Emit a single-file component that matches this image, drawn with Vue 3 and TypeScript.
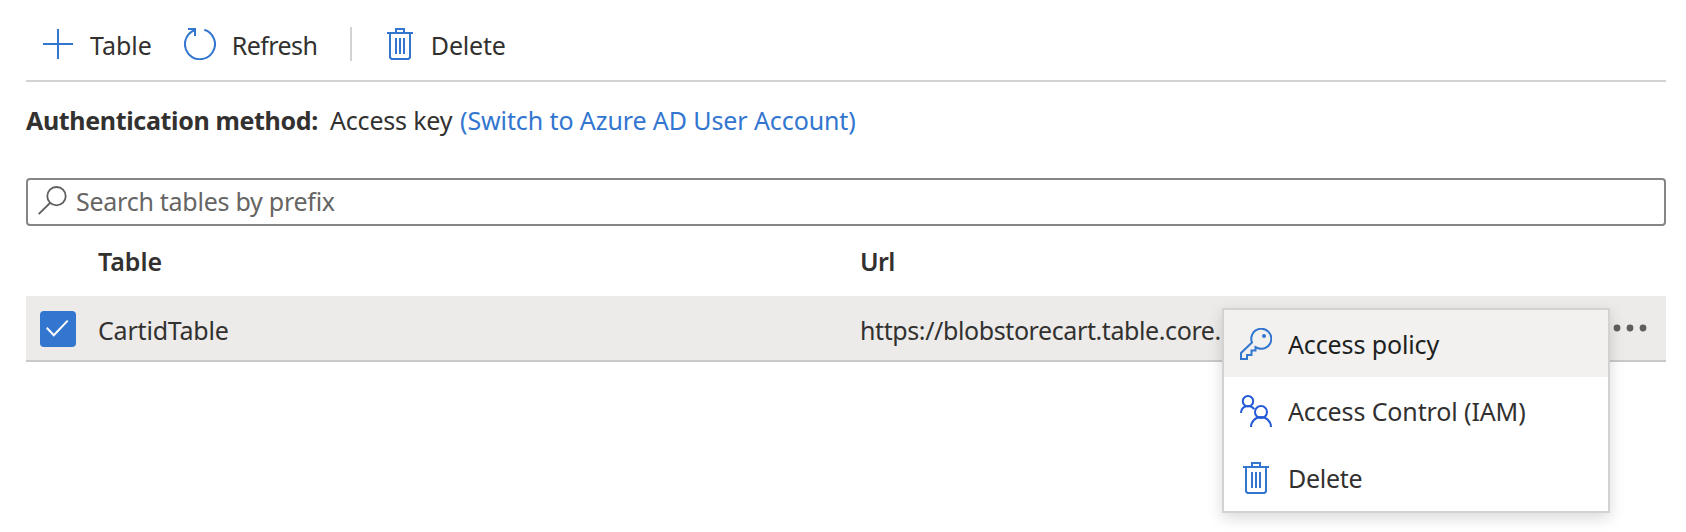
<script setup lang="ts">
import { ref } from 'vue'

interface TableRow {
  name: string
  url: string
}

const rows: TableRow[] = [
  { name: 'CartidTable', url: 'https://blobstorecart.table.core.' },
]

const menuItems = [
  { icon: 'key', label: 'Access policy' },
  { icon: 'people', label: 'Access Control (IAM)' },
  { icon: 'trash', label: 'Delete' },
]

const prefix = ref('')
</script>

<template>
  <main class="page">
    <div class="toolbar">
      <button class="command add">
        <svg width="30" height="30" viewBox="0 0 30 30"><path d="M15 0V30M0 15H30" /></svg>
        <span>Table</span>
      </button>
      <button class="command refresh">
        <svg width="32" height="32" viewBox="0 0 32 32">
          <path d="M20.3 1.8A15 15 0 1 1 10.5 2.2M4 1H11V8" />
        </svg>
        <span>Refresh</span>
      </button>
      <span class="divider"></span>
      <button class="command delete">
        <svg width="26" height="32" viewBox="0 0 26 32">
          <path d="M0 5H26M3 5V29.5L4.5 31H21.5L23 29.5V5M9 5V1H17V5M9 10V26M13 10V26M17 10V26" />
        </svg>
        <span>Delete</span>
      </button>
    </div>

    <p class="auth">
      <strong>Authentication method:</strong>
      <span class="method">Access key</span>
      <a class="switch">(Switch to Azure AD User Account)</a>
    </p>

    <label class="search">
      <svg width="29" height="29" viewBox="0 0 29 29">
        <circle cx="18.5" cy="10.2" r="9.2" /><path d="M12 17L.7 28.2" />
      </svg>
      <input v-model="prefix" type="text" placeholder="Search tables by prefix" />
    </label>

    <div class="grid head">
      <span></span><span>Table</span><span class="url-head">Url</span>
    </div>
    <div v-for="row in rows" :key="row.name" class="grid row">
      <span class="check">
        <svg width="36" height="36" viewBox="0 0 36 36"><path d="M6.7 16.8L13.8 24.2L27.7 9.6" /></svg>
      </span>
      <span>{{ row.name }}</span>
      <span class="url">{{ row.url }}</span>
      <svg class="more" width="34" height="8" viewBox="0 0 34 8">
        <circle cx="4" cy="4" r="3.4" /><circle cx="17" cy="4" r="3.4" /><circle cx="30" cy="4" r="3.4" />
      </svg>
    </div>

    <div class="menu">
      <div v-for="item in menuItems" :key="item.label" class="item" :class="item.icon">
        <svg v-if="item.icon === 'key'" width="32" height="32" viewBox="0 0 32 32">
          <path d="M12 14.5A10 10 0 1 1 17.5 20L15.5 19V22.5H11.5V27H7V31H1V25L12 14.5Z" />
          <circle class="dot" cx="24" cy="8" r="2" />
        </svg>
        <svg v-else-if="item.icon === 'people'" width="32" height="32" viewBox="0 0 32 32">
          <circle cx="8" cy="6.2" r="5.2" /><circle cx="21" cy="17" r="6" />
          <path d="M1 18A7.2 7.2 0 0 1 14.2 14.2M11 32A10 10 0 0 1 31 32" />
        </svg>
        <svg v-else width="32" height="32" viewBox="0 0 32 32">
          <path d="M3 5H29M6 5V29.5L7.5 31H24.5L26 29.5V5M12 5V1H20V5M12 10V26M16 10V26M20 10V26" />
        </svg>
        <span>{{ item.label }}</span>
      </div>
    </div>
  </main>
</template>

<style>
body { margin: 0; background: #fff; }
</style>

<style scoped>
.page {
  position: relative;
  box-sizing: border-box;
  width: 1686px;
  height: 532px;
  padding: 0 20px 0 26px;
  overflow: hidden;
  color: #323130;
  font: 25px/34px "Noto Sans", "Open Sans", sans-serif;
}
svg { display: block; flex: none; fill: none; stroke: #3276d0; stroke-width: 2; }
.toolbar {
  display: flex;
  align-items: center;
  height: 80px;
  padding: 8px 0 0 17px;
  box-sizing: border-box;
  box-shadow: 0 2px #d2d2d2;
}
.command {
  display: flex;
  align-items: center;
  height: 34px;
  padding: 0;
  border: 0;
  background: none;
  color: inherit;
  font: inherit;
}
.command span { padding-top: 1px; }
.add svg { margin-right: 17px; }
.refresh { margin-left: 32px; }
.refresh svg { margin-right: 16px; }
.refresh span { width: 85px; letter-spacing: -.6px; }
.divider { width: 2px; height: 34px; margin-left: 33px; background: #d2d2d2; }
.delete { margin-left: 35px; }
.delete svg { margin-right: 18px; }
.delete span { letter-spacing: -.2px; }
.auth { display: flex; height: 34px; margin: 23px 0 0; white-space: nowrap; }
.auth strong { width: 304px; font-weight: 700; letter-spacing: -.35px; }
.method { width: 130px; letter-spacing: -.2px; }
.switch { color: #3276d0; letter-spacing: -.1px; }
.search {
  display: flex;
  align-items: center;
  box-sizing: border-box;
  height: 48px;
  margin-top: 41px;
  padding-left: 10px;
  border: 2px solid #868584;
  border-radius: 4px;
}
.search svg { stroke: #605e5c; stroke-width: 1.8; margin-top: -3px; }
.search input {
  flex: 1;
  height: 34px;
  padding: 0;
  margin: -2px 0 0 9px;
  border: 0;
  outline: 0;
  background: none;
  color: #323130;
  font: inherit;
  letter-spacing: -.26px;
}
.search input::placeholder { color: #666564; opacity: 1; }
.grid { display: grid; grid-template-columns: 58px 762px 1fr 34px; align-items: center; padding: 0 14px; }
.grid > span { white-space: nowrap; }
.head { height: 70px; box-sizing: border-box; font-weight: 600; }
.url-head { letter-spacing: -.7px; }
.row { height: 66px; box-sizing: border-box; border-bottom: 2px solid #cac9c8; background: #ecebe9; }
.row > span:nth-child(2) { padding-top: 4px; letter-spacing: -.2px; }
.row .url { padding-top: 4px; letter-spacing: -.4px; }
.check { width: 36px; height: 36px; border-radius: 4px; background: #3276d0; margin-top: 1px; }
.check svg { stroke: #fff; }
.more { fill: #605e5c; stroke: none; margin: -1px 5px 0 0; justify-self: end; }
.menu {
  position: absolute;
  left: 1222px;
  top: 308px;
  width: 388px;
  height: 205px;
  box-sizing: border-box;
  border: 2px solid #d2d2d2;
  background: #fff;
  box-shadow: 0 5px 14px rgba(0, 0, 0, .15);
}
.item { display: flex; align-items: center; height: 67px; padding-left: 16px; white-space: nowrap; }
.item svg { margin-right: 16px; }
.item span { padding-top: 1px; letter-spacing: -.12px; }
.item.trash span { letter-spacing: -.3px; }
.item.key { background: #f2f1f0; color: #201f1e; }
.key .dot { fill: #3276d0; stroke: none; }
.people svg { stroke: #2459d8; }
</style>
